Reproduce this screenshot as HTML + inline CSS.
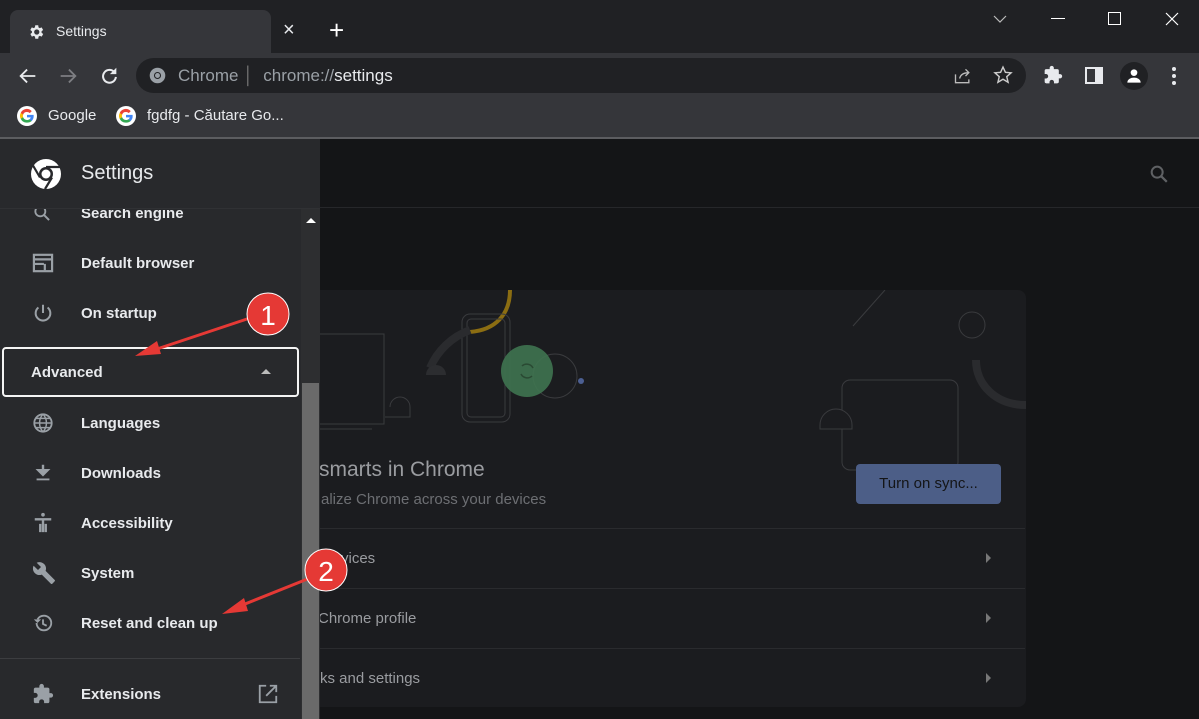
<!DOCTYPE html>
<html><head><meta charset="utf-8"><style>
*{margin:0;padding:0;box-sizing:border-box}
body{width:1199px;height:719px;overflow:hidden;background:#141517;font-family:"Liberation Sans",Arial,sans-serif;position:relative;color:#e8eaed}
.abs{position:absolute}
.item{position:absolute;left:0;width:300px;height:50px;display:flex;align-items:center;font-size:15px;font-weight:bold;color:#e8eaed}
.item svg{position:absolute;left:32px}
.item span{position:absolute;left:81px}
.row{position:absolute;left:300px;width:725px;height:60px;border-top:1px solid #2a2b2e;font-size:15px;color:#9a9ca0}
.row span{position:absolute;left:18px;top:21px}
.row i{position:absolute;right:34px;top:24px;border-left:5px solid #777;border-top:5px solid transparent;border-bottom:5px solid transparent}
</style></head><body>
<!-- title bar -->
<div class="abs" style="left:0;top:0;width:1199px;height:53px;background:#202124"></div>
<div class="abs" style="left:10px;top:10px;width:261px;height:43px;background:#35363a;border-radius:8px 8px 0 0"></div>
<svg class="abs" style="left:27px;top:23px" width="18" height="18" viewBox="0 0 24 24"><path fill="#e8eaed" d="M19.4 13a7.5 7.5 0 000-2l2.1-1.6-2-3.5-2.5 1a7.3 7.3 0 00-1.7-1L15 3h-4l-.4 2.9a7.3 7.3 0 00-1.700 1l-2.5-1-2 3.5L6.6 11a7.5 7.5 0 000 2l-2.1 1.6 2 3.5 2.5-1a7.3 7.3 0 001.7 1L11 21h4l.4-2.9a7.3 7.3 0 001.7-1l2.5 1 2-3.5zM13 15.5a3.5 3.5 0 110-7 3.5 3.5 0 010 7z"/></svg>
<div class="abs" style="left:56px;top:23px;font-size:14px;color:#e8eaed">Settings</div>
<div class="abs" style="left:283px;top:19px;font-size:20px;color:#e8eaed">×</div>
<div class="abs" style="left:329px;top:15px;font-size:26px;color:#fff;font-weight:300">+</div>
<svg class="abs" style="left:990px;top:12px" width="20" height="14"><path d="M4 4l6 6 6-6" stroke="#bbb" fill="none" stroke-width="1.2"/></svg>
<div class="abs" style="left:1051px;top:18px;width:14px;height:1px;background:#fff"></div>
<div class="abs" style="left:1108px;top:12px;width:13px;height:13px;border:1px solid #fff"></div>
<svg class="abs" style="left:1164px;top:11px" width="16" height="16"><path d="M2 2l12 12M14 2L2 14" stroke="#fff" stroke-width="1.2"/></svg>
<!-- toolbar -->
<div class="abs" style="left:0;top:53px;width:1199px;height:85px;background:#35363a"></div>
<div class="abs" style="left:0;top:137px;width:1199px;height:2px;background:#5c5d60"></div>
<svg class="abs" style="left:17px;top:65px" width="22" height="22" viewBox="0 0 24 24"><path d="M20 12H5M11 5l-7 7 7 7" stroke="#e8eaed" stroke-width="2" fill="none"/></svg>
<svg class="abs" style="left:57px;top:65px" width="22" height="22" viewBox="0 0 24 24"><path d="M4 12h15M13 5l7 7-7 7" stroke="#7d7e82" stroke-width="2" fill="none"/></svg>
<svg class="abs" style="left:98px;top:65px" width="22" height="22" viewBox="0 0 24 24"><path d="M18 8a7 7 0 101.5 5" stroke="#e8eaed" stroke-width="2.2" fill="none"/><path d="M20 3v7h-7z" fill="#e8eaed"/></svg>
<div class="abs" style="left:136px;top:58px;width:890px;height:35px;background:#202124;border-radius:18px"></div>
<svg class="abs" style="left:149px;top:67px" width="17" height="17" viewBox="0 0 24 24"><circle cx="12" cy="12" r="11" fill="#9aa0a6"/><circle cx="12" cy="12" r="5" fill="#202124"/><circle cx="12" cy="12" r="3.5" fill="#9aa0a6"/></svg>
<div class="abs" style="left:178px;top:66px;font-size:17px;color:#9aa0a6">Chrome <span style="color:#777">│</span>&nbsp; chrome://<span style="color:#e8eaed">settings</span></div>
<svg class="abs" style="left:953px;top:66px" width="20" height="20" viewBox="0 0 24 24"><path d="M3 10v10h16v-4M8 15c1-5 5-7 11-7M15 4l4 4-4 4" stroke="#bbb" stroke-width="1.6" fill="none"/></svg>
<svg class="abs" style="left:993px;top:65px" width="20" height="20" viewBox="0 0 24 24"><path d="M12 2.5l2.9 6.3 6.8.6-5.2 4.6 1.6 6.7L12 17.1l-6.1 3.6 1.6-6.7L2.3 9.4l6.8-.6z" stroke="#ccc" stroke-width="1.7" fill="none"/></svg>
<svg class="abs" style="left:1043px;top:65px" width="20" height="20" viewBox="0 0 24 24"><path fill="#e8eaed" d="M20.5 11H19V7a2 2 0 00-2-2h-4V3.5a2.5 2.5 0 00-5 0V5H4a2 2 0 00-2 2v3.8h1.5a2.7 2.7 0 010 5.4H2V20a2 2 0 002 2h3.8v-1.5a2.7 2.7 0 015.4 0V22H17a2 2 0 002-2v-4h1.5a2.5 2.5 0 000-5z"/></svg>
<div class="abs" style="left:1085px;top:67px;width:18px;height:17px;border:2px solid #e8eaed"><div style="position:absolute;right:0;top:0;width:6px;height:100%;background:#e8eaed"></div></div>
<div class="abs" style="left:1120px;top:62px;width:28px;height:28px;border-radius:50%;background:#202124"></div>
<svg class="abs" style="left:1124px;top:66px" width="20" height="20" viewBox="0 0 24 24"><circle cx="12" cy="8" r="4" fill="#fff"/><path d="M4 20c0-4 4-6 8-6s8 2 8 6z" fill="#fff"/></svg>
<svg class="abs" style="left:1170px;top:66px" width="8" height="20"><circle cx="4" cy="3" r="2" fill="#e8eaed"/><circle cx="4" cy="10" r="2" fill="#e8eaed"/><circle cx="4" cy="17" r="2" fill="#e8eaed"/></svg>
<!-- bookmarks -->
<svg class="abs" style="left:17px;top:106px" width="20" height="20" viewBox="0 0 24 24"><circle cx="12" cy="12" r="12" fill="#fff"/><path d="M20 12.2c0-.6 0-1.1-.1-1.6H12v3h4.5a4 4 0 01-1.7 2.5v2h2.7c1.6-1.4 2.5-3.5 2.5-5.9z" fill="#4285f4"/><path d="M12 20c2.2 0 4.1-.7 5.5-2l-2.7-2a5 5 0 01-7.5-2.6H4.5v2.1A8 8 0 0012 20z" fill="#34a853"/><path d="M7.3 13.4a4.8 4.8 0 010-3.1V8.2H4.5a8 8 0 000 7.3z" fill="#fbbc05"/><path d="M12 7.2c1.3 0 2.4.4 3.3 1.3l2.4-2.4A8 8 0 004.5 8.2l2.8 2.1A4.8 4.8 0 0112 7.2z" fill="#ea4335"/></svg>
<div class="abs" style="left:48px;top:107px;font-size:15px;color:#e8eaed">Google</div>
<svg class="abs" style="left:116px;top:106px" width="20" height="20" viewBox="0 0 24 24"><circle cx="12" cy="12" r="12" fill="#fff"/><path d="M20 12.2c0-.6 0-1.1-.1-1.6H12v3h4.5a4 4 0 01-1.7 2.5v2h2.7c1.6-1.4 2.5-3.5 2.5-5.9z" fill="#4285f4"/><path d="M12 20c2.2 0 4.1-.7 5.5-2l-2.7-2a5 5 0 01-7.5-2.6H4.5v2.1A8 8 0 0012 20z" fill="#34a853"/><path d="M7.3 13.4a4.8 4.8 0 010-3.1V8.2H4.5a8 8 0 000 7.3z" fill="#fbbc05"/><path d="M12 7.2c1.3 0 2.4.4 3.3 1.3l2.4-2.4A8 8 0 004.5 8.2l2.8 2.1A4.8 4.8 0 0112 7.2z" fill="#ea4335"/></svg>
<div class="abs" style="left:147px;top:107px;font-size:15px;color:#e8eaed">fgdfg - Căutare Go...</div>
<!-- main header -->
<div class="abs" style="left:320px;top:139px;width:879px;height:69px;background:#141517;border-bottom:1px solid #26272a"></div>
<svg class="abs" style="left:1148px;top:163px" width="22" height="22" viewBox="0 0 24 24"><circle cx="10" cy="10" r="6" stroke="#5f6164" stroke-width="2.2" fill="none"/><path d="M14.5 14.5l6 6" stroke="#5f6164" stroke-width="2.4"/></svg>
<!-- card -->
<div class="abs" style="left:300px;top:290px;width:726px;height:417px;background:#1b1c1f;border-radius:8px"></div>
<svg class="abs" style="left:300px;top:290px" width="726" height="200">
<path d="M210 0c0 25-15 40-40 42" stroke="#8b6d12" stroke-width="4" fill="none"/>
<rect x="162" y="24" width="48" height="108" rx="8" stroke="#3a3b3e" fill="none"/>
<rect x="167" y="29" width="38" height="98" rx="4" stroke="#3a3b3e" fill="none"/>
<path d="M12 44h72v90H12M0 139h72" stroke="#3a3b3e" fill="none"/>
<path d="M130 78a70 70 0 0140-38" stroke="#2a2b2e" stroke-width="8" fill="none"/>
<path d="M126 85a10 10 0 0120 0z" fill="#2c2d30"/>
<path d="M90 117a10 10 0 0120 0v10H85" stroke="#3a3b3e" fill="none"/>
<circle cx="255" cy="86" r="22" stroke="#3a3b3e" fill="none"/>
<circle cx="227" cy="81" r="26" fill="#3f7450" opacity=".9"/>
<path d="M222 76a7 7 0 0111 2M232 86a7 7 0 01-11-2" stroke="#2a4a33" stroke-width="1.5" fill="none"/>
<circle cx="281" cy="91" r="3" fill="#4c5f92"/>
<path d="M553 36L585 0" stroke="#3a3b3e"/>
<circle cx="672" cy="35" r="13" stroke="#3a3b3e" fill="none"/>
<rect x="542" y="90" width="116" height="90" rx="8" stroke="#3a3b3e" fill="none"/>
<path d="M676 70c0 25 20 45 50 45" stroke="#2a2b2e" stroke-width="8" fill="none"/>
<path d="M520 135a16 16 0 0132 0v4h-32z" stroke="#3a3b3e" fill="#1b1c1f"/>
</svg>
<div class="abs" style="left:319px;top:458px;font-size:21px;color:#9a9ca0">smarts in Chrome</div>
<div class="abs" style="left:321px;top:491px;font-size:15px;color:#6d6f73">alize Chrome across your devices</div>
<div class="abs" style="left:856px;top:464px;width:145px;height:40px;background:#4c5e87;border-radius:4px;font-size:15px;color:#141517;text-align:center;line-height:40px">Turn on sync...</div>
<div class="row" style="top:528px"><span style="left:36px">rvices</span><i></i></div>
<div class="row" style="top:588px"><span>Chrome profile</span><i></i></div>
<div class="row" style="top:648px"><span style="left:20px">ks and settings</span><i></i></div>
<!-- sidebar -->
<div class="abs" style="left:0;top:139px;width:320px;height:70px;background:#28292c"></div>
<div class="abs" style="left:0;top:209px;width:301px;height:510px;background:#28292c"></div>
<div class="abs" style="left:0;top:208px;width:320px;height:1px;background:#303134"></div>
<svg class="abs" style="left:30px;top:158px" width="32" height="32" viewBox="0 0 32 32"><circle cx="16" cy="16" r="15" fill="#fff"/><circle cx="16" cy="16" r="7" fill="#28292c"/><circle cx="16" cy="16" r="4.5" fill="#fff"/><path d="M16 9h14M10 19.5L3 7.5M22 19.5L15 31" stroke="#28292c" stroke-width="2.2"/></svg>
<div class="abs" style="left:81px;top:162px;font-size:20px;color:#e8eaed">Settings</div>
<div class="abs" style="left:0;top:209px;width:300px;height:510px;overflow:hidden">
 <div class="item" style="top:-21px"><svg width="20" height="20" viewBox="0 0 24 24"><circle cx="10" cy="10" r="6" stroke="#9aa0a6" stroke-width="2.2" fill="none"/><path d="M14.5 14.5l6 6" stroke="#9aa0a6" stroke-width="2.4"/></svg><span>Search engine</span></div>
</div>
<div class="item" style="top:238px"><svg width="22" height="20" viewBox="0 0 24 22"><rect x="2" y="2" width="20" height="18" fill="none" stroke="#9aa0a6" stroke-width="2.4"/><path d="M2 7h20M3 12h10M14 12v7" stroke="#9aa0a6" stroke-width="2.4"/></svg><span>Default browser</span></div>
<div class="item" style="top:288px"><svg width="22" height="22" viewBox="0 0 24 24"><path d="M12 3v9M7 6a8 8 0 1010 0" stroke="#9aa0a6" stroke-width="2.2" fill="none"/></svg><span>On startup</span></div>
<div class="abs" style="left:2px;top:347px;width:297px;height:50px;border:2px solid #f4f4f4;border-radius:4px"></div>
<div class="abs" style="left:31px;top:364px;font-size:15px;font-weight:bold">Advanced</div>
<div class="abs" style="left:261px;top:369px;border-bottom:5px solid #bbb;border-left:5px solid transparent;border-right:5px solid transparent"></div>
<div class="item" style="top:398px"><svg width="22" height="22" viewBox="0 0 24 24"><circle cx="12" cy="12" r="9.5" stroke="#9aa0a6" stroke-width="2" fill="none"/><path d="M2.5 12h19M12 2.5c-5 5-5 14 0 19M12 2.5c5 5 5 14 0 19M4 7h16M4 17h16" stroke="#9aa0a6" stroke-width="1.6" fill="none"/></svg><span>Languages</span></div>
<div class="item" style="top:448px"><svg width="22" height="22" viewBox="0 0 24 24"><path d="M12 3v9M7 9l5 5 5-5z" stroke="#9aa0a6" stroke-width="2.6" fill="#9aa0a6"/><path d="M5 19h14" stroke="#9aa0a6" stroke-width="2"/></svg><span>Downloads</span></div>
<div class="item" style="top:498px"><svg width="22" height="24" viewBox="0 0 24 24"><circle cx="12" cy="3" r="2" fill="#9aa0a6"/><path d="M3 8h18M12 8v14M9 13v9M15 13v9" stroke="#9aa0a6" stroke-width="2.6"/></svg><span>Accessibility</span></div>
<div class="item" style="top:548px"><svg width="24" height="24" viewBox="0 0 24 24"><path fill="#9aa0a6" d="M22.7 19l-9.1-9.1c.9-2.3.4-5-1.5-6.9-2-2-5-2.4-7.4-1.3L9 6 6 9 1.6 4.7C.4 7.1.9 10.1 2.9 12.1c1.9 1.9 4.6 2.4 6.9 1.5l9.1 9.1c.4.4 1 .4 1.4 0l2.3-2.3c.5-.4.5-1.1.1-1.400z"/></svg><span>System</span></div>
<div class="item" style="top:598px"><svg width="22" height="22" viewBox="0 0 24 24"><path d="M5 12a8 8 0 108-8c-3 0-5.5 1.6-7 4" stroke="#9aa0a6" stroke-width="2" fill="none"/><path d="M2 8l4 4 4-4z" fill="#9aa0a6"/><path d="M12 8v5l4 2" stroke="#9aa0a6" stroke-width="2" fill="none"/></svg><span>Reset and clean up</span></div>
<div class="abs" style="left:0;top:658px;width:300px;height:1px;background:#3c3d40"></div>
<div class="item" style="top:669px"><svg width="22" height="22" viewBox="0 0 24 24"><path fill="#9aa0a6" d="M20.5 11H19V7a2 2 0 00-2-2h-4V3.5a2.5 2.5 0 00-5 0V5H4a2 2 0 00-2 2v3.8h1.5a2.7 2.7 0 010 5.4H2V20a2 2 0 002 2h3.8v-1.5a2.7 2.7 0 015.4 0V22H17a2 2 0 002-2v-4h1.5a2.5 2.5 0 000-5z"/></svg><span>Extensions</span>
<svg style="left:257px" width="22" height="22" viewBox="0 0 24 24"><path d="M10 3H3v18h18v-7M14 3h7v7M21 3L10 14" stroke="#9aa0a6" stroke-width="2" fill="none"/></svg></div>
<!-- scrollbar -->
<div class="abs" style="left:301px;top:209px;width:19px;height:510px;background:#2d2e30"></div>
<div class="abs" style="left:306px;top:218px;border-bottom:5px solid #fff;border-left:5px solid transparent;border-right:5px solid transparent"></div>
<div class="abs" style="left:302px;top:383px;width:17px;height:336px;background:#6a6a6a"></div>
<!-- annotations -->
<svg class="abs" style="left:0;top:0" width="1199" height="719">
<path d="M250 318L148 352" stroke="#e53935" stroke-width="3"/><path d="M135 356l22-15 4 13z" fill="#e53935"/>
<circle cx="268" cy="314" r="21" fill="#e53935" stroke="#fff" stroke-width="1"/>
<text x="268" y="325" font-family="Liberation Sans" font-size="28" fill="#fff" text-anchor="middle">1</text>
<path d="M310 578L235 608" stroke="#e53935" stroke-width="3"/><path d="M222 614l22-16 4 13z" fill="#e53935"/>
<circle cx="326" cy="570" r="21" fill="#e53935" stroke="#fff" stroke-width="1"/>
<text x="326" y="581" font-family="Liberation Sans" font-size="28" fill="#fff" text-anchor="middle">2</text>
</svg>
</body></html>
